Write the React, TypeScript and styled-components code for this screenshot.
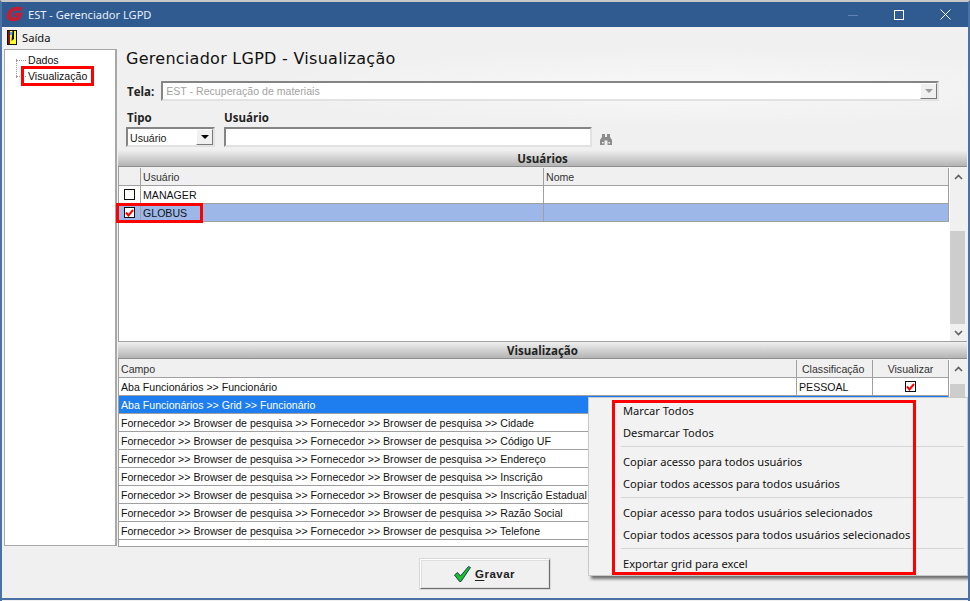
import React from 'react';
import styled, { createGlobalStyle } from 'styled-components';

const GlobalStyle = createGlobalStyle`
  html, body {
    margin: 0;
    padding: 0;
    background: #f0f0f0;
  }
  body {
    font-family: 'Liberation Sans', Arial, sans-serif;
    font-size: 10.6px;
    color: #000;
    overflow: hidden;
  }
`;

const Window = styled.div`
  position: relative;
  box-sizing: border-box;
  width: 970px;
  height: 601px;
  display: flex;
  flex-direction: column;
  background: #f0f0f0;
  border-top: 2px solid #c8c8c8;
  border-left: 2px solid #4a72a4;
  border-right: 2px solid #4a72a4;
  overflow: hidden;
`;

const TitleBar = styled.div`
  height: 25px;
  flex: none;
  display: flex;
  align-items: center;
  background: #2f5b91;
  color: #fff;
  padding-left: 4px;
  font-family: 'Noto Sans', sans-serif;
  font-size: 11.1px;
`;

const TitleText = styled.span`
  margin-left: 4px;
  flex: 1;
  color: #e8eef6;
`;

const WindowButtons = styled.div`
  display: flex;
`;

const WindowButton = styled.div`
  width: 46px;
  height: 25px;
  display: flex;
  align-items: center;
  justify-content: center;
`;

const MenuBar = styled.div`
  height: 20px;
  flex: none;
  display: flex;
  align-items: center;
  gap: 5px;
  padding-left: 5px;
  font-family: 'Noto Sans', sans-serif;
  font-size: 11.2px;
  color: #111;
`;

const Body = styled.div`
  flex: 1;
  min-height: 0;
  display: flex;
  padding: 1px 1px 0 2px;
  gap: 1px;
`;

const TreePanel = styled.div`
  box-sizing: border-box;
  width: 113px;
  height: 497px;
  margin-top: 1px;
  background: #fff;
  border: 1px solid #a8a8a8;
  border-right-width: 2px;
  padding: 2px 0 0 9px;
  display: flex;
  flex-direction: column;
  flex: none;
`;

const TreeItem = styled.div<{ $marked?: boolean }>`
  display: flex;
  align-items: center;
  height: 16px;
  position: relative;
  padding-left: 14px;
  color: #111;

  &::before {
    content: '';
    position: absolute;
    left: 2px;
    top: 8px;
    width: 10px;
    border-top: 1px dotted #9a9a9a;
  }

  ${(p) =>
    p.$marked &&
    `
    &::after {
      content: '';
      position: absolute;
      left: 7px;
      top: -2px;
      width: 67px;
      height: 14px;
      border: 3px solid #f00;
    }
  `}
`;

const TreeBranch = styled.div`
  position: absolute;
  left: 14px;
  top: 57px;
  height: 19px;
  border-left: 1px dotted #9a9a9a;
`;

const Main = styled.div`
  flex: 1;
  min-width: 0;
  display: flex;
  flex-direction: column;
`;

const FormArea = styled.div`
  height: 102px;
  flex: none;
  padding-left: 8px;
  box-sizing: border-box;
  background: radial-gradient(ellipse 420px 40px at 560px 40px, #f8f8f8, #f0f0f0);
`;

const Heading = styled.div`
  font-family: 'DejaVu Sans', 'Liberation Sans', sans-serif;
  font-size: 16px;
  line-height: 20px;
  padding-top: 1px;
  color: #111;
  letter-spacing: 0.27px;
`;

const TelaRow = styled.div`
  display: flex;
  align-items: center;
  gap: 7px;
  margin-top: 12px;
`;

const BoldLabel = styled.label<{ $indent?: boolean }>`
  font-family: 'Open Sans', sans-serif;
  font-weight: 700;
  font-size: 11.5px;
  line-height: 15px;
  color: #222;
  margin-left: ${(p) => (p.$indent ? 1 : 0)}px;
`;

const Sunken = styled.div`
  box-sizing: border-box;
  height: 20px;
  background: #fff;
  border: 2px solid;
  border-color: #858585 #e2e2e2 #e2e2e2 #858585;
  display: flex;
  align-items: center;
  padding-left: 2px;
`;

const TelaCombo = styled(Sunken)`
  width: 778px;
  color: #a3a3a3;
  justify-content: space-between;
  padding-left: 3px;
  padding-right: 0;
`;

const DropButton = styled.div<{ $disabled?: boolean }>`
  width: 17px;
  height: 16px;
  box-sizing: border-box;
  background: #f0f0f0;
  border: 1px solid;
  border-color: #fff #7a7a7a #7a7a7a #fff;
  display: flex;
  align-items: center;
  justify-content: center;

  &::after {
    content: '';
    border-left: 4px solid transparent;
    border-right: 4px solid transparent;
    border-top: 4px solid ${(p) => (p.$disabled ? '#9c9c9c' : '#000')};
  }
`;

const FilterRow = styled.div`
  display: flex;
  margin-top: 9px;
  align-items: flex-start;
`;

const FilterGroup = styled.div`
  display: flex;
  flex-direction: column;
  gap: 2px;
`;

const TipoCombo = styled(Sunken)`
  width: 89px;
  justify-content: space-between;
  margin-right: 9px;
  color: #222;
  padding-top: 1px;

  ${DropButton} {
    margin-top: -1px;
  }
`;

const UserInput = styled(Sunken)`
  width: 368px;
`;

const FinderIcon = styled.svg`
  margin: 24px 0 0 8px;
`;

const SectionBar = styled.div`
  height: 16px;
  flex: none;
  background: linear-gradient(#f0f0f0, #b4b4b4);
  border-bottom: 1px solid #8f8f8f;
  display: flex;
  align-items: center;
  justify-content: center;
  font-family: 'Open Sans', sans-serif;
  font-weight: 700;
  font-size: 11.5px;
  color: #222;
`;

const Grid = styled.div<{ $height: number }>`
  position: relative;
  flex: none;
  height: ${(p) => p.$height}px;
  display: flex;
  background: #fff;
  border-left: 1px solid #a0a0a0;
  border-bottom: 1px solid #a0a0a0;
  box-sizing: border-box;
`;

const GridBody = styled.div`
  flex: 1;
  min-width: 0;
  margin-right: 1px;
`;

const Row = styled.div<{ $bg?: string; $color?: string }>`
  height: 18px;
  box-sizing: border-box;
  display: flex;
  background: ${(p) => p.$bg || '#fff'};
  color: ${(p) => p.$color || '#111'};
  border-bottom: 1px solid #a0a0a0;
`;

const HeaderRow = styled(Row)`
  background: #f0f0f0;
  color: #333;
  height: 19px;
  padding-top: 1px;
`;

const Cell = styled.div<{ $width?: number; $center?: boolean }>`
  box-sizing: border-box;
  ${(p) => (p.$width ? `width: ${p.$width}px; flex: none;` : 'flex: 1; min-width: 0;')}
  display: flex;
  align-items: center;
  justify-content: ${(p) => (p.$center ? 'center' : 'flex-start')};
  padding-left: ${(p) => (p.$center ? 0 : 2)}px;
  border-right: 1px solid #a0a0a0;
  white-space: nowrap;
  overflow: hidden;
`;

const CheckBox = styled.span`
  box-sizing: border-box;
  width: 11px;
  height: 11px;
  border: 1px solid #111;
  background: #fff;
  display: flex;
  align-items: center;
  justify-content: center;
`;

const GlobusMark = styled.div`
  position: absolute;
  left: -3px;
  top: 36px;
  width: 87px;
  height: 20px;
  box-sizing: border-box;
  border: 3px solid #f00;
`;

const Scrollbar = styled.div`
  width: 17px;
  flex: none;
  background: #f0f0f0;
  display: flex;
  flex-direction: column;
  align-items: stretch;
`;

const ScrollArrow = styled.div<{ $height: number }>`
  height: ${(p) => p.$height}px;
  flex: none;
  display: flex;
  align-items: center;
  justify-content: center;
`;

const ScrollTrack = styled.div<{ $top: number; $size: number }>`
  flex: 1;
  padding-top: ${(p) => p.$top}px;
  padding-right: 2px;

  &::after {
    content: '';
    display: block;
    height: ${(p) => p.$size}px;
    background: #cdcdcd;
  }
`;

const Footer = styled.div`
  flex: 1;
  display: flex;
  justify-content: center;
  padding: 12px 116px 0 0;
`;

const SaveButton = styled.div`
  box-sizing: border-box;
  width: 130px;
  height: 30px;
  background: #f0f0f0;
  border: 1px solid;
  border-color: #fff #6e6e6e #6e6e6e #fff;
  box-shadow: inset 0 0 0 1px #dedede, 0 0 0 1px #d8d8d8;
  display: flex;
  align-items: center;
  justify-content: center;
  gap: 4px;
  font-weight: 700;
  font-size: 11.5px;
  letter-spacing: 0.5px;
  color: #222;
  u {
    text-underline-offset: 2px;
  }
`;

const BottomEdge = styled.div`
  height: 2px;
  flex: none;
  background: #4a72a4;
  margin: 0 -2px 1px;
`;

const ContextMenu = styled.div`
  position: absolute;
  left: 586px;
  top: 395px;
  width: 380px;
  height: 179px;
  box-sizing: border-box;
  background: #f2f2f2;
  border: 1px solid #c8c8c8;
  box-shadow: 3px 3px 3px rgba(0, 0, 0, 0.55);
  padding: 1px 3px 0 2px;
  font-family: 'Noto Sans', 'Open Sans', sans-serif;
  font-size: 11.12px;
  color: #111;
`;

const MenuItem = styled.div`
  height: 22px;
  display: flex;
  align-items: center;
  padding-left: 32px;
  white-space: nowrap;
`;

const MenuSeparator = styled.div`
  height: 1px;
  background: #d4d4d4;
  margin: 3px 0 3px 30px;
`;

const MenuMark = styled.div`
  position: absolute;
  left: 23px;
  top: 2px;
  width: 304px;
  height: 175px;
  box-sizing: border-box;
  border: 3px solid #f00;
`;

const Tick = () => (
  <svg width="9" height="8" viewBox="0 0 9 8">
    <path d="M1 3.5 L3.5 6.5 L8 1" stroke="#f00" strokeWidth="2" fill="none" />
  </svg>
);

const Chevron = ({ up }: { up?: boolean }) => (
  <svg width="9" height="6" viewBox="0 0 9 6">
    <path d={up ? 'M1 5 L4.5 1.5 L8 5' : 'M1 1 L4.5 4.5 L8 1'} stroke="#606060" strokeWidth="1.6" fill="none" />
  </svg>
);

const fieldRows = [
  'Fornecedor >> Browser de pesquisa >> Fornecedor >> Browser de pesquisa >> Cidade',
  'Fornecedor >> Browser de pesquisa >> Fornecedor >> Browser de pesquisa >> Código UF',
  'Fornecedor >> Browser de pesquisa >> Fornecedor >> Browser de pesquisa >> Endereço',
  'Fornecedor >> Browser de pesquisa >> Fornecedor >> Browser de pesquisa >> Inscrição',
  'Fornecedor >> Browser de pesquisa >> Fornecedor >> Browser de pesquisa >> Inscrição Estadual',
  'Fornecedor >> Browser de pesquisa >> Fornecedor >> Browser de pesquisa >> Razão Social',
  'Fornecedor >> Browser de pesquisa >> Fornecedor >> Browser de pesquisa >> Telefone',
];

const App = () => {
  return (
    <Window>
      <GlobalStyle />
      <TitleBar>
        <svg width="18" height="17" viewBox="0 0 18 17">
          <path
            d="M17 1.5 L15 5 C11 3.8 6.5 4.5 5.5 8 C5 10.5 7.5 12 10.5 11.2 L11.2 9.8 L7.8 9.8 L9.5 6.8 L17 6.8 L14 13.5 C9.5 16 3.5 16 1.5 13 C-0.5 9.5 1.5 4 6 2 C9.5 0.5 14 0.5 17 1.5 Z"
            fill="#c01f36"
          />
        </svg>
        <TitleText>EST - Gerenciador LGPD</TitleText>
        <WindowButtons>
          <WindowButton>
            <svg width="10" height="10" viewBox="0 0 10 10">
              <path d="M0 5.5 H10" stroke="#5f83b0" strokeWidth="1" />
            </svg>
          </WindowButton>
          <WindowButton>
            <svg width="10" height="10" viewBox="0 0 10 10">
              <rect x="0.5" y="0.5" width="9" height="9" stroke="#fff" fill="none" />
            </svg>
          </WindowButton>
          <WindowButton>
            <svg width="11" height="11" viewBox="0 0 11 11">
              <path d="M0.5 0.5 L10.5 10.5 M10.5 0.5 L0.5 10.5" stroke="#fff" strokeWidth="1" />
            </svg>
          </WindowButton>
        </WindowButtons>
      </TitleBar>
      <MenuBar>
        <svg width="10" height="15" viewBox="0 0 10 15">
          <rect x="0" y="0" width="10" height="15" fill="#111" />
          <rect x="1" y="1" width="2" height="13" fill="#8a1010" />
          <path d="M3 1 H9 V14 H3 Z" fill="#ffff30" />
          <path d="M5.5 1 H7 V9 L4.5 11 Z" fill="#111" />
          <rect x="3" y="2" width="2" height="3" fill="#30c0e0" />
        </svg>
        Saída
      </MenuBar>
      <Body>
        <TreePanel>
          <TreeBranch />
          <TreeItem>Dados</TreeItem>
          <TreeItem $marked>Visualização</TreeItem>
        </TreePanel>
        <Main>
          <FormArea>
            <Heading>Gerenciador LGPD - Visualização</Heading>
            <TelaRow>
              <BoldLabel $indent>Tela:</BoldLabel>
              <TelaCombo>
                EST - Recuperação de materiais
                <DropButton $disabled />
              </TelaCombo>
            </TelaRow>
            <FilterRow>
              <FilterGroup>
                <BoldLabel $indent>Tipo</BoldLabel>
                <TipoCombo>
                  Usuário
                  <DropButton />
                </TipoCombo>
              </FilterGroup>
              <FilterGroup>
                <BoldLabel>Usuário</BoldLabel>
                <UserInput />
              </FilterGroup>
              <FinderIcon width="12" height="11" viewBox="0 0 12 11">
                <path
                  d="M2 0 H5 V3 H7 V0 H10 V3 L12 6 V11 H7.5 V6.5 H4.5 V11 H0 V6 L2 3 Z"
                  fill="#8c8c8c"
                />
                <rect x="2" y="8" width="1.5" height="1.5" fill="#f0f0f0" />
                <rect x="8.5" y="8" width="1.5" height="1.5" fill="#f0f0f0" />
              </FinderIcon>
            </FilterRow>
          </FormArea>
          <SectionBar>Usuários</SectionBar>
          <Grid $height={175}>
            <GridBody>
              <HeaderRow>
                <Cell $width={22} />
                <Cell $width={403}>Usuário</Cell>
                <Cell>Nome</Cell>
              </HeaderRow>
              <Row>
                <Cell $width={22} $center>
                  <CheckBox />
                </Cell>
                <Cell $width={403}>MANAGER</Cell>
                <Cell />
              </Row>
              <Row $bg="#9db8e8">
                <Cell $width={22} $center>
                  <CheckBox>
                    <Tick />
                  </CheckBox>
                </Cell>
                <Cell $width={403}>GLOBUS</Cell>
                <Cell />
              </Row>
            </GridBody>
            <Scrollbar>
              <ScrollArrow $height={19}>
                <Chevron up />
              </ScrollArrow>
              <ScrollTrack $top={45} $size={93} />
              <ScrollArrow $height={17}>
                <Chevron />
              </ScrollArrow>
            </Scrollbar>
            <GlobusMark />
          </Grid>
          <SectionBar>Visualização</SectionBar>
          <Grid $height={188}>
            <GridBody>
              <HeaderRow>
                <Cell>Campo</Cell>
                <Cell $width={76}>&nbsp;Classificação</Cell>
                <Cell $width={76} $center>
                  Visualizar
                </Cell>
              </HeaderRow>
              <Row>
                <Cell>Aba Funcionários &gt;&gt; Funcionário</Cell>
                <Cell $width={76}>PESSOAL</Cell>
                <Cell $width={76} $center>
                  <CheckBox>
                    <Tick />
                  </CheckBox>
                </Cell>
              </Row>
              <Row $bg="#1e7ef0" $color="#fff">
                <Cell>Aba Funcionários &gt;&gt; Grid &gt;&gt; Funcionário</Cell>
              </Row>
              {fieldRows.map((text) => (
                <Row key={text}>
                  <Cell>{text}</Cell>
                </Row>
              ))}
            </GridBody>
            <Scrollbar>
              <ScrollArrow $height={19}>
                <Chevron up />
              </ScrollArrow>
              <ScrollTrack $top={6} $size={14} />
            </Scrollbar>
          </Grid>
          <Footer>
            <SaveButton>
              <svg width="17" height="16" viewBox="0 0 17 16">
                <path d="M0.5 9 L3.5 6.5 L6.5 10 L14.5 0.5 L16.5 1.5 L7 15.5 H5.5 Z" fill="#19c22a" stroke="#12304a" strokeWidth="0.9" />
              </svg>
              <span>
                <u>G</u>ravar
              </span>
            </SaveButton>
          </Footer>
        </Main>
      </Body>
      <BottomEdge />
      <ContextMenu>
        <MenuItem>Marcar Todos</MenuItem>
        <MenuItem>Desmarcar Todos</MenuItem>
        <MenuSeparator />
        <MenuItem>Copiar acesso para todos usuários</MenuItem>
        <MenuItem>Copiar todos acessos para todos usuários</MenuItem>
        <MenuSeparator />
        <MenuItem>Copiar acesso para todos usuários selecionados</MenuItem>
        <MenuItem>Copiar todos acessos para todos usuários selecionados</MenuItem>
        <MenuSeparator />
        <MenuItem>Exportar grid para excel</MenuItem>
        <MenuMark />
      </ContextMenu>
    </Window>
  );
};

export default App;
